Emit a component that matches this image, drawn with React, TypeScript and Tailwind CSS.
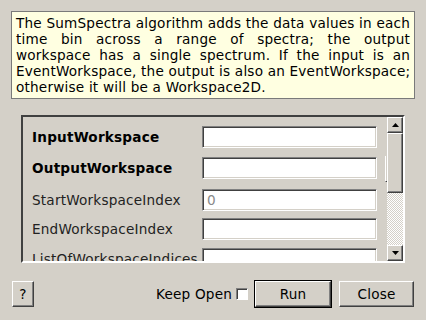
import React from 'react'

const font = { fontFamily: '"DejaVu Sans", Verdana, sans-serif' }

const descLines = [
  'The SumSpectra algorithm adds the data values in each',
  'time bin across a range of spectra; the output',
  'workspace has a single spectrum. If the input is an',
  'EventWorkspace, the output is also an EventWorkspace;',
]

const Field = ({ placeholder }: { placeholder?: string }) => (
  <div className="w-[175px] h-[22px] shrink-0 bg-white border border-t-[#808080] border-l-[#808080] border-b-white border-r-white shadow-[inset_1px_1px_0_#404040,inset_-1px_-1px_0_#d4d0c8] flex items-center pl-[4px] text-[#8a8a8a]">
    {placeholder}
  </div>
)

const Row = ({
  label,
  bold,
  placeholder,
  className,
  extra,
}: {
  label: string
  bold?: boolean
  placeholder?: string
  className?: string
  extra?: React.ReactNode
}) => (
  <div className={`flex items-center h-[22px] ${className ?? ''}`}>
    <div className={`w-[179px] shrink-0 pl-[9px] whitespace-nowrap ${bold ? 'font-bold text-black' : 'text-[#222]'}`}>
      {label}
    </div>
    <Field placeholder={placeholder} />
    {extra}
  </div>
)

const Raised = ({ className, children }: { className?: string; children?: React.ReactNode }) => (
  <div
    className={`bg-[#d4d0c8] border border-t-white border-l-white border-b-[#404040] border-r-[#404040] shadow-[inset_-1px_-1px_0_#808080] flex items-center justify-center ${className ?? ''}`}
  >
    {children}
  </div>
)

const Scrollbar = () => (
  <div className="w-[16px] shrink-0 flex flex-col">
    <Raised className="h-[16px]">
      <svg width="7" height="4" viewBox="0 0 7 4">
        <path d="M3.5 0 L7 4 L0 4 Z" fill="#000" />
      </svg>
    </Raised>
    <Raised className="h-[60px]" />
    <div className="flex-1 bg-[repeating-conic-gradient(#ffffff_0_25%,#d4d0c8_0_50%)] bg-[length:2px_2px]" />
    <Raised className="h-[16px]">
      <svg width="7" height="4" viewBox="0 0 7 4">
        <path d="M0 0 L7 0 L3.5 4 Z" fill="#000" />
      </svg>
    </Raised>
  </div>
)

export default function App() {
  return (
    <div
      className="w-[426px] h-[320px] bg-[#d4d0c8] overflow-hidden text-[13.6px] leading-[16px] tracking-[0.2px] text-black"
      style={font}
    >
      <div className="pt-[11px] pl-[11px]">
        <div className="w-[404px] h-[88px] bg-[#ffffe1] border border-[#7a7a7a] px-[4px] pt-[3px] whitespace-nowrap">
          {descLines.map(l => (
            <div key={l} className="text-justify [text-align-last:justify]">
              {l}
            </div>
          ))}
          <div>otherwise it will be a Workspace2D.</div>
        </div>
      </div>

      <div className="ml-[21px] mt-[16px] w-[384px] h-[148px] border-2 border-t-[#404040] border-l-[#404040] border-b-white border-r-white flex overflow-hidden">
        <div className="flex-1 flex flex-col overflow-hidden">
          <Row label="InputWorkspace" bold className="mt-[9px]" />
          <Row
            label="OutputWorkspace"
            bold
            className="mt-[9px]"
            extra={<div className="ml-[8px] w-[3px] h-[26px] self-start -mt-[1px] border-l border-b border-l-white border-b-[#404040]" />}
          />
          <Row label="StartWorkspaceIndex" placeholder="0" className="mt-[10px]" />
          <Row label="EndWorkspaceIndex" className="mt-[7px]" />
          <Row label="ListOfWorkspaceIndices" className="mt-[8px]" />
        </div>
        <Scrollbar />
      </div>

      <div className="flex items-center mt-[17px] pl-[12px]">
        <Raised className="w-[22px] h-[26px]">?</Raised>
        <div className="ml-[122px] flex items-center">
          <span>Keep Open</span>
          <div className="ml-[4px] w-[12px] h-[12px] bg-white border border-t-[#808080] border-l-[#808080] border-b-white border-r-white shadow-[inset_1px_1px_0_#404040]" />
        </div>
        <div className="ml-[6px] border border-black">
          <Raised className="w-[76px] h-[26px]">Run</Raised>
        </div>
        <Raised className="ml-[7px] w-[75px] h-[26px]">Close</Raised>
      </div>
    </div>
  )
}
